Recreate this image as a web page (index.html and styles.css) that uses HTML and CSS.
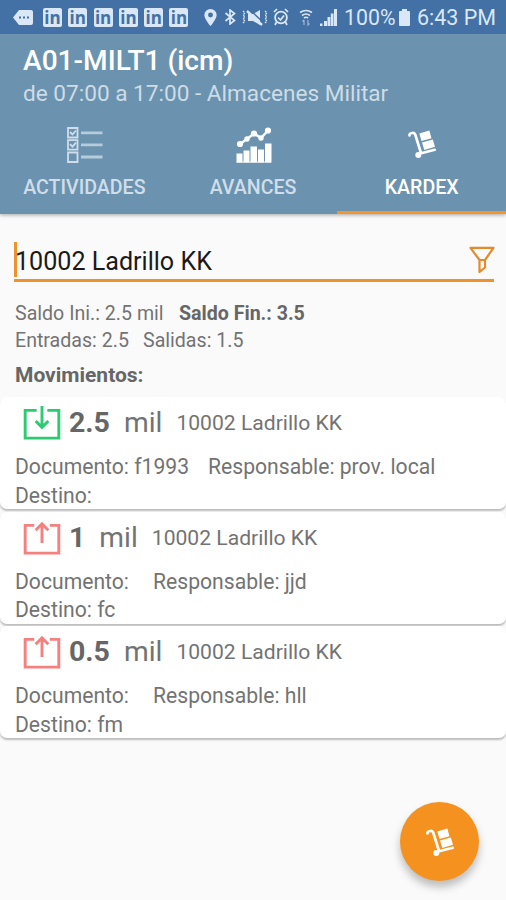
FILE: index.html
```html
<!DOCTYPE html>
<html lang="es">
<head>
<meta charset="utf-8">
<meta name="viewport" content="width=device-width">
<title>Kardex</title>
<link rel="stylesheet" href="styles.css">
</head>
<body>
<svg class="defs" aria-hidden="true">
  <symbol id="trolley" viewBox="0 0 28 28">
    <path d="M1.500 5.500V4.500Q2 3.300 4 3Q6.500 2.400 7.200 4.500L13.100 23.300L26.800 19.800" fill="none" stroke="currentColor" stroke-width="2.700" stroke-linecap="round" stroke-linejoin="round"/>
    <path d="M11.300 3.500L21.300 .6L23.500 8.200L13.500 11ZM14 12.600L24.800 9.500L27 16.800L16.300 19.900Z" fill="currentColor"/>
    <circle cx="10.300" cy="25" r="3" fill="currentColor"/>
  </symbol>
  <symbol id="in" viewBox="0 0 38 36">
    <path d="M13.500 4.500H1.700V33H36.300V4.500H24.500M19 0V21.500M12.500 15.500L19 22L25.500 15.500" fill="none" stroke="currentColor" stroke-width="3"/>
  </symbol>
  <symbol id="out" viewBox="0 0 38 36">
    <path d="M11 4.500H1.700V33H36.300V4.500H27M19 22.500V3.500M12.500 9.500L19 3L25.500 9.500" fill="none" stroke="currentColor" stroke-width="3"/>
  </symbol>
</svg>

<header class="header">
  <div class="status">
    <svg class="more" viewBox="0 0 20 17"><path d="M6 1H18Q20 1 20 3V14Q20 16 18 16H6L0 8.500Z" fill="currentColor"/><path d="M6 8.500H8M10 8.500H12M14 8.500H16" stroke="#4370a5" stroke-width="2"/></svg>
    <div class="linked"><span>in</span><span>in</span><span>in</span><span>in</span><span>in</span><span>in</span></div>
    <svg class="pin" viewBox="0 0 13 18"><path fill="currentColor" fill-rule="evenodd" d="M6.500 0A6.400 6.400 0 0 0 0 6.500C0 10.500 6.500 18 6.500 18S13 10.500 13 6.500A6.400 6.400 0 0 0 6.500 0ZM6.500 3.800A2.600 2.600 0 1 1 6.500 9A2.600 2.600 0 0 1 6.500 3.800Z"/></svg>
    <svg class="bt" viewBox="0 0 11 16"><path d="M1 4L10 11.500L5.500 15V1L10 4.500L1 12" fill="none" stroke="currentColor" stroke-width="1.700"/></svg>
    <svg class="mute" viewBox="0 0 26 17"><path d="M6 5H11L18 1V16L11 12H6Z" fill="currentColor"/><path d="M7 0L22 14" stroke="#4370a5" stroke-width="1.500"/><path d="M5 2L20 16" stroke="currentColor" stroke-width="2.400"/><path d="M1 2L3 4L1 6L3 8L1 10L3 12L1 14M23 2L25 4L23 6L25 8L23 10L25 12L23 14" fill="none" stroke="currentColor" stroke-width="1.300" stroke-dasharray="2 1"/></svg>
    <svg class="alarm" viewBox="0 0 16 18"><circle cx="8" cy="9.500" r="5.900" fill="none" stroke="currentColor" stroke-width="1.800"/><path d="M5 9.500L7.500 12L11 7.500M1 4L4 1M15 4L12 1M3.500 14L2 17M12.500 14L14 17" fill="none" stroke="currentColor" stroke-width="1.700"/></svg>
    <svg class="wifi" viewBox="0 0 14 17"><path d="M1 3.500Q7-.5 13 3.500M3 6.500Q7 3.500 11 6.500M5 9Q7 7.500 9 9" fill="none" stroke="currentColor" stroke-width="1.700"/><path d="M5 16V11M3.500 12.500L5 11M9 11V16L10.500 14.500" fill="none" stroke="currentColor" stroke-width="1.200" opacity=".6"/></svg>
    <svg class="signal" viewBox="0 0 17 17"><path d="M0 14.500H2.500V17H0ZM4 12H7V17H4ZM7.500 8H10.300V17H7.500ZM10.800 4.500H13.500V17H10.800ZM14 0H17V17H14Z" fill="currentColor"/></svg>
    <span class="percent">100%</span>
    <svg class="battery" viewBox="0 0 11 17"><path d="M3 0H8V2H10Q11 2 11 3V16Q11 17 10 17H1Q0 17 0 16V3Q0 2 1 2H3Z" fill="currentColor"/></svg>
    <span class="time">6:43 PM</span>
  </div>
  <h1 class="title">A01-MILT1 (icm)</h1>
  <p class="subtitle">de 07:00 a 17:00 - Almacenes Militar</p>
  <nav class="tabs">
    <div class="tab">
      <svg class="tab-icon list" viewBox="0 0 36 36"><g fill="none" stroke="currentColor" stroke-width="1.800"><path d="M1 1H10.500V10.500H1ZM1 13.200H10.500V22.700H1ZM1 25.500H10.500V35H1Z"/><path d="M3 5L5.500 7.500L9 3.500M3 17.200L5.500 19.700L9 15.700"/></g><path d="M14 5.800H35.500M14 17.900H35.500M14 30H35.500" stroke="currentColor" stroke-width="2.800" opacity=".75"/></svg>
      <span>ACTIVIDADES</span>
    </div>
    <div class="tab">
      <svg class="tab-icon chart" viewBox="0 0 36 36"><path d="M.5 26.500H6.500V35.500H.5ZM7.500 23.500H13.500V35.500H7.500ZM14.500 19.500H21V35.500H14.500ZM22 22.500H28V35.500H22ZM29 16.500H35.500V35.500H29Z" fill="#fff"/><path d="M.5 35H35" stroke="#fff" stroke-width="1"/><path d="M4 17L11 12L18 6.500L25 11L32 3.500" fill="none" stroke="#fff" stroke-width="2.500"/><g fill="#fff"><circle cx="4" cy="17" r="3.100"/><circle cx="11" cy="12" r="2.700"/><circle cx="18" cy="6.500" r="3.100"/><circle cx="25" cy="11" r="2.700"/><circle cx="32" cy="3.500" r="3.100"/></g></svg>
      <span>AVANCES</span>
    </div>
    <div class="tab active">
      <svg class="tab-icon cart"><use href="#trolley"/></svg>
      <span>KARDEX</span>
    </div>
  </nav>
</header>

<main>
  <section class="search">
    <div class="field"><span>10002 Ladrillo KK</span></div>
    <svg class="filter" viewBox="0 0 26 28"><path d="M1.500 1.800H24.500L16 14V21.500L10.500 26V14ZM10.500 14H16" fill="none" stroke="currentColor" stroke-width="2.200" stroke-linejoin="round"/></svg>
  </section>
  <section class="summary">
    <div class="line"><span class="s1">Saldo Ini.: 2.5 mil</span><b>Saldo Fin.: 3.5</b></div>
    <div class="line"><span class="s2">Entradas: 2.5</span><span>Salidas: 1.5</span></div>
    <h2>Movimientos:</h2>
  </section>
  <section class="cards">
    <article class="card">
      <div class="top"><svg class="move in"><use href="#in"/></svg><b>2.5</b><span class="unit">mil</span><span class="item">10002 Ladrillo KK</span></div>
      <div class="detail"><span class="doc wide">Documento: f1993</span><span>Responsable: prov. local</span></div>
      <div class="detail">Destino:</div>
    </article>
    <article class="card">
      <div class="top"><svg class="move out"><use href="#out"/></svg><b>1</b><span class="unit">mil</span><span class="item">10002 Ladrillo KK</span></div>
      <div class="detail"><span class="doc">Documento:</span><span>Responsable: jjd</span></div>
      <div class="detail">Destino: fc</div>
    </article>
    <article class="card">
      <div class="top"><svg class="move out"><use href="#out"/></svg><b>0.5</b><span class="unit">mil</span><span class="item">10002 Ladrillo KK</span></div>
      <div class="detail"><span class="doc">Documento:</span><span>Responsable: hll</span></div>
      <div class="detail">Destino: fm</div>
    </article>
  </section>
</main>
<button class="fab" aria-label="Kardex"><svg><use href="#trolley"/></svg></button>
</body>
</html>
```
FILE: styles.css
```css
* { box-sizing: border-box; }
body {
  margin: 0;
  height: 900px;
  overflow: hidden;
  background: #fafafa;
  color: #737373;
  font-family: Roboto, "Liberation Sans", sans-serif;
  white-space: nowrap;
}
svg { display: block; flex: none; }
.defs { position: absolute; width: 0; height: 0; }

.header {
  height: 214px;
  background: #6b93af;
  color: #fff;
  box-shadow: 0 1px 4px rgba(0, 0, 0, .35);
}
.status {
  display: flex;
  align-items: center;
  height: 34px;
  padding-left: 13px;
  background: #4370a5;
  color: #d9e7f6;
}
.more { width: 20px; height: 17px; margin-right: 10px; }
.linked { display: flex; gap: 6.3px; width: 147px; }
.linked span {
  width: 19px;
  height: 19px;
  border-radius: 2px;
  background: #d9e7f6;
  color: #4370a5;
  font: bold 17px/20px "Open Sans", sans-serif;
  text-align: center;
}
.pin { width: 13px; height: 17px; margin-left: 14px; }
.bt { width: 12px; height: 16px; margin-left: 7px; }
.mute { width: 26px; height: 17px; margin-left: 6px; }
.alarm { width: 16px; height: 18px; margin-left: 5px; }
.wifi { width: 14px; height: 17px; margin-left: 10px; }
.signal { width: 17px; height: 17px; margin-left: 7px; }
.percent { width: 51px; margin-left: 7px; font-size: 21.3px; }
.battery { width: 11px; height: 17px; margin-left: 4px; }
.time { margin-left: 7px; font-size: 21.5px; }

.title {
  margin: 0;
  padding: 11px 0 0 23px;
  font-size: 28.1px;
  font-weight: 500;
  line-height: 32px;
}
.subtitle {
  margin: 0;
  padding: 4px 0 0 23px;
  color: #cddce7;
  font-size: 22.6px;
  line-height: 26px;
}
.tabs { display: flex; height: 107px; }
.tab {
  display: flex;
  flex: 1;
  flex-direction: column;
  align-items: center;
  justify-content: space-between;
  padding: 20px 0 13px;
  color: #cfdeea;
  font-size: 19.6px;
  font-weight: 500;
  line-height: 26px;
}
.tab.active { border-bottom: 3px solid #f4942a; padding-bottom: 10px; color: #fff; }
.tab-icon { width: 36px; height: 36px; margin-left: 1px; }
.tab-icon.cart { width: 28px; height: 28px; margin-top: 3px; }

main { padding-top: 28px; }
.search {
  display: flex;
  justify-content: space-between;
  height: 40px;
  margin: 0 12px 0 14px;
  border-bottom: 3px solid #ee922d;
}
.field {
  height: 35px;
  border-left: 3px solid #ee922d;
  color: #1a1a1a;
  font-size: 25.1px;
  line-height: 39px;
}
.field span { margin-left: -2px; }
.filter { width: 26px; height: 28px; margin: 4px -1px 0 0; color: #e58a2c; }
.summary { height: 115px; padding: 18px 15px 0; font-size: 19.6px; }
.line { display: flex; line-height: 27px; }
.line b { color: #666; font-weight: 700; }
.s1 { width: 164px; }
.s2 { width: 128px; }
.summary h2 {
  margin: 6px 0 0;
  color: #666;
  font-size: 21px;
  font-weight: 700;
  line-height: 31px;
}
.cards { display: flex; flex-direction: column; gap: 2.5px; }
.card {
  height: 112px;
  padding: 5px 15px 0;
  border-radius: 7px;
  background: #fff;
  box-shadow: 0 2px 2px rgba(0, 0, 0, .25);
}
.top { display: flex; height: 51px; padding-left: 8px; line-height: 42px; }
.move { width: 38px; height: 35px; margin: 4px 8px 0 0; }
.move.in { color: #2ccb71; }
.move.out { color: #f58080; }
.top b { color: #666; font-size: 28.5px; }
.unit { margin: 0 14px 0 14px; font-size: 28.2px; }
.item { font-size: 21.1px; line-height: 41px; }
.detail { display: flex; font-size: 21.15px; line-height: 28.5px; }
.doc { width: 138px; }
.doc.wide { width: 193px; }

.fab {
  position: absolute;
  left: 400px;
  top: 802px;
  display: flex;
  align-items: center;
  justify-content: center;
  width: 79px;
  height: 79px;
  padding: 0;
  border: 0;
  border-radius: 50%;
  background: #f5921f;
  color: #fff;
  box-shadow: 0 6px 9px rgba(0, 0, 0, .25);
}
.fab svg { width: 28px; height: 28px; }
```
